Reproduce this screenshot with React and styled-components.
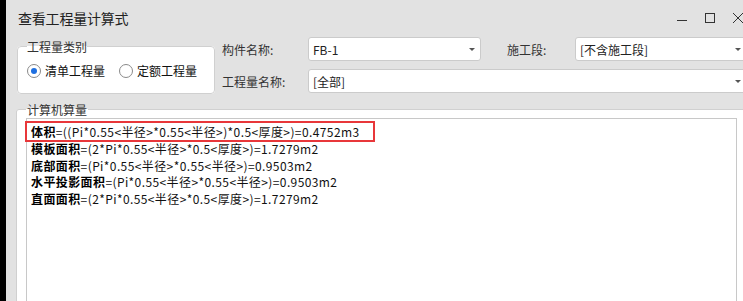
import React from 'react';
import styled, { createGlobalStyle } from 'styled-components';

const GlobalStyle = createGlobalStyle`
    html, body {
        margin: 0;
        padding: 0;
        background: #000;
        overflow: hidden;
    }
    body {
        font-family: "Noto Sans CJK SC", "Noto Sans", sans-serif;
        font-size: 12px;
        color: #222;
    }
`;

const Window = styled.div`
    margin-left: 6px;
    width: 750px;
    height: 100vh;
    background: #e2e2e2;
    display: flex;
    flex-direction: column;
`;

const TitleBar = styled.div`
    height: 35px;
    flex: none;
    display: flex;
    align-items: center;
    justify-content: space-between;
    padding: 0 13px 0 12px;
    box-sizing: border-box;
`;

const Title = styled.div`
    font-size: 14px;
    color: #222;
    letter-spacing: -0.2px;
`;

const Controls = styled.div`
    display: flex;
    align-items: center;
    gap: 18px;
    color: #333;

    svg {
        display: block;
        width: 10px;
        height: 10px;
    }
`;

const Top = styled.div`
    height: 58px;
    flex: none;
    display: flex;
    align-items: flex-start;
    padding: 0 9px 0 11px;
`;

const Group = styled.fieldset`
    margin: 0;
    background: #fff;
    border: 1px solid #d0d0d0;
    border-radius: 4px;
    min-width: 0;
    box-sizing: border-box;
`;

const TypeGroup = styled(Group)`
    width: 198px;
    margin-top: 3px;
    padding: 0 9px 7px;
`;

const Legend = styled.legend`
    padding: 0;
    font-size: 12px;
    line-height: 17px;
    color: #333;
`;

const RadioRow = styled.div`
    height: 31px;
    display: flex;
    align-items: center;
    gap: 14px;
`;

const RadioOption = styled.label`
    display: flex;
    align-items: center;
    gap: 4px;
    color: #111;
`;

const RadioCircle = styled.span`
    width: 14px;
    height: 14px;
    box-sizing: border-box;
    border: 1px solid #8a8a8a;
    border-radius: 50%;
    background: #fff;
    display: flex;
    align-items: center;
    justify-content: center;

    &::after {
        content: '';
        width: 6px;
        height: 6px;
        border-radius: 50%;
        background: ${(p) => (p.$checked ? '#1e6fe0' : 'transparent')};
    }
`;

const Fields = styled.div`
    flex: 1;
    margin: 2px 0 0 7px;
    display: grid;
    grid-template-columns: 86px 173px 94px 1fr;
    grid-template-rows: 24px 24px;
    row-gap: 8px;
    align-items: center;
`;

const FieldLabel = styled.div`
    color: #333;
    padding-left: ${(p) => p.$indent || 0}px;
`;

const Select = styled.div`
    height: 24px;
    box-sizing: border-box;
    background: #fff;
    border: 1px solid #cbcbcb;
    border-radius: 3px;
    display: flex;
    align-items: center;
    justify-content: space-between;
    padding: 0 5px 0 4px;
    color: #222;
    grid-column: ${(p) => p.$span || 'auto'};

    &::after {
        content: '';
        border-left: 3px solid transparent;
        border-right: 3px solid transparent;
        border-top: 3px solid #555;
        margin-top: 1px;
    }
`;

const CalcGroup = styled(Group)`
    margin: 8px 9px 0 10px;
    padding: 0 9px;
    flex: 1;
    display: flex;
    flex-direction: column;
    border-bottom: none;
    border-radius: 3px 3px 0 0;

    legend {
        padding: 0 1px;
    }
`;

const Output = styled.div`
    flex: 1;
    background: #fff;
    border: 1px solid #c8c8c8;
    border-bottom: none;
    padding: 5px 4px;
`;

const Line = styled.div`
    position: relative;
    font-size: 12px;
    line-height: 16.75px;
    letter-spacing: 0.4px;
    color: #111;
    white-space: nowrap;

    b {
        font-weight: 700;
        color: #000;
    }

    ${(p) =>
        p.$marked &&
        `
        &::after {
            content: '';
            position: absolute;
            left: -6px;
            top: -3px;
            width: 350px;
            height: 21px;
            box-sizing: border-box;
            border: 2px solid #e8373a;
        }
    `}
`;

const lines = [
    ['体积', '=((Pi*0.55<半径>*0.55<半径>)*0.5<厚度>)=0.4752m3'],
    ['模板面积', '=(2*Pi*0.55<半径>*0.5<厚度>)=1.7279m2'],
    ['底部面积', '=(Pi*0.55<半径>*0.55<半径>)=0.9503m2'],
    ['水平投影面积', '=(Pi*0.55<半径>*0.55<半径>)=0.9503m2'],
    ['直面面积', '=(2*Pi*0.55<半径>*0.5<厚度>)=1.7279m2'],
];

export default function App() {
    return (
        <>
            <GlobalStyle />
            <Window>
                <TitleBar>
                    <Title>查看工程量计算式</Title>
                    <Controls>
                        <svg viewBox="0 0 10 10" fill="none" stroke="currentColor" strokeWidth="1">
                            <line x1="0" y1="7.5" x2="10" y2="7.5" />
                        </svg>
                        <svg viewBox="0 0 10 10" fill="none" stroke="currentColor" strokeWidth="1">
                            <rect x="0.5" y="0.5" width="9" height="9" />
                        </svg>
                        <svg viewBox="0 0 10 10" fill="none" stroke="currentColor" strokeWidth="1">
                            <line x1="0" y1="0" x2="10" y2="10" />
                            <line x1="10" y1="0" x2="0" y2="10" />
                        </svg>
                    </Controls>
                </TitleBar>
                <Top>
                    <TypeGroup>
                        <Legend>工程量类别</Legend>
                        <RadioRow>
                            <RadioOption>
                                <RadioCircle $checked />
                                清单工程量
                            </RadioOption>
                            <RadioOption>
                                <RadioCircle />
                                定额工程量
                            </RadioOption>
                        </RadioRow>
                    </TypeGroup>
                    <Fields>
                        <FieldLabel>构件名称:</FieldLabel>
                        <Select>FB-1</Select>
                        <FieldLabel $indent={26}>施工段:</FieldLabel>
                        <Select>[不含施工段]</Select>
                        <FieldLabel>工程量名称:</FieldLabel>
                        <Select $span="2 / 5">[全部]</Select>
                    </Fields>
                </Top>
                <CalcGroup>
                    <Legend>计算机算量</Legend>
                    <Output>
                        {lines.map(([name, formula], i) => (
                            <Line key={i} $marked={i === 0}>
                                <b>{name}</b>
                                {formula}
                            </Line>
                        ))}
                    </Output>
                </CalcGroup>
            </Window>
        </>
    );
}
